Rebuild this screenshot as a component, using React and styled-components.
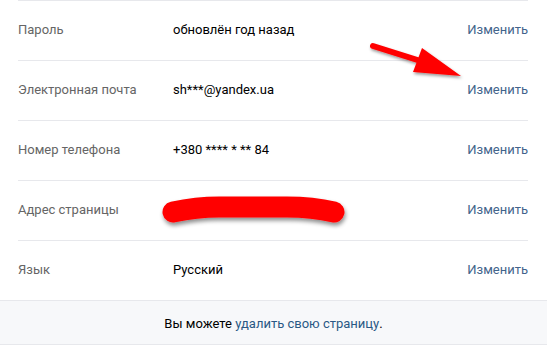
import React from "react"
import styled, { createGlobalStyle } from "styled-components"

const GlobalStyle = createGlobalStyle`
  html, body {
    margin: 0;
    padding: 0;
    background: #ffffff;
  }
  body {
    font-family: Roboto, "Open Sans", "Liberation Sans", sans-serif;
    -webkit-font-smoothing: antialiased;
  }
`

const rows = [
  { label: "Пароль", value: "обновлён год назад" },
  { label: "Электронная почта", value: "sh***@yandex.ua" },
  { label: "Номер телефона", value: "+380 **** * ** 84" },
  { label: "Адрес страницы", value: null, hidden: true },
  { label: "Язык", value: "Русский" },
]

const App = () => {
  return (
    <>
      <GlobalStyle />
      <Card>
        <List>
          {rows.map((row) => (
            <Row key={row.label}>
              <Label>{row.label}</Label>
              <Value>{row.hidden ? <Scribble /> : row.value}</Value>
              <EditLink href="#">Изменить</EditLink>
            </Row>
          ))}
        </List>
        <Footer>
          Вы можете <FooterLink href="#">удалить свою страницу</FooterLink>.
        </Footer>
        <Arrow />
      </Card>
    </>
  )
}

// red marker stroke over the page address
const Scribble = () => (
  <ScribbleSvg width="200" height="44" viewBox="0 0 200 44">
    <defs>
      <filter id="sh" filterUnits="userSpaceOnUse" x="0" y="0" width="200" height="44">
        <feGaussianBlur in="SourceAlpha" stdDeviation="2" />
        <feOffset dx="1" dy="3" result="blur" />
        <feFlood floodColor="#000" floodOpacity="0.45" />
        <feComposite in2="blur" operator="in" />
        <feMerge>
          <feMergeNode />
          <feMergeNode in="SourceGraphic" />
        </feMerge>
      </filter>
    </defs>
    <path
      d="M16 22 C 30 19, 46 17, 62 17 L 130 17 C 148 17, 164 19, 177 22"
      stroke="#ff0000"
      strokeWidth="21"
      strokeLinecap="round"
      fill="none"
      filter="url(#sh)"
    />
  </ScribbleSvg>
)

const Arrow = () => (
  <ArrowSvg width="110" height="50" viewBox="0 0 110 50">
    <defs>
      <filter id="ash" filterUnits="userSpaceOnUse" x="0" y="0" width="110" height="50">
        <feGaussianBlur in="SourceAlpha" stdDeviation="1.5" />
        <feOffset dx="1" dy="2" result="blur" />
        <feFlood floodColor="#000" floodOpacity="0.4" />
        <feComposite in2="blur" operator="in" />
        <feMerge>
          <feMergeNode />
          <feMergeNode in="SourceGraphic" />
        </feMerge>
      </filter>
    </defs>
    <g filter="url(#ash)" fill="#ff0000">
      <path d="M6 6 L 60 23" stroke="#ff0000" strokeWidth="6" strokeLinecap="round" />
      <path d="M55 8 L 94 36 L 46 32 Z" />
    </g>
  </ArrowSvg>
)

const Card = styled.div`
  position: relative;
  width: 547px;
  background: #ffffff;
`

const List = styled.div`
  display: flex;
  flex-direction: column;
  padding: 0 19px 0 18px;
`

const Row = styled.div`
  display: flex;
  align-items: center;
  height: 60px;
  padding-bottom: 2px;
  border-top: 1px solid #e7e8ec;
  box-sizing: border-box;
  font-size: 13px;
`

const Label = styled.div`
  width: 155px;
  color: #656565;
`

const Value = styled.div`
  flex: 1;
  height: 20px;
  color: #000000;
  display: flex;
  align-items: center;
`

const EditLink = styled.a`
  color: #42648b;
  text-decoration: none;
`

const ScribbleSvg = styled.svg`
  display: block;
  flex: none;
  margin-left: -16px;
  margin-top: 4px;
`

const Footer = styled.div`
  height: 45px;
  display: flex;
  align-items: center;
  justify-content: center;
  padding-top: 2px;
  background: #f7f8fa;
  border-top: 1px solid #e7e8ec;
  border-bottom: 1px solid #e7e8ec;
  box-shadow: 0 3px 0 -1px #e7e8ec;
  box-sizing: border-box;
  font-size: 13px;
  color: #000000;
  white-space: pre;
`

const FooterLink = styled.a`
  color: #2a5885;
  text-decoration: none;
`

const ArrowSvg = styled.svg`
  position: absolute;
  left: 367px;
  top: 40px;
`

export default App
